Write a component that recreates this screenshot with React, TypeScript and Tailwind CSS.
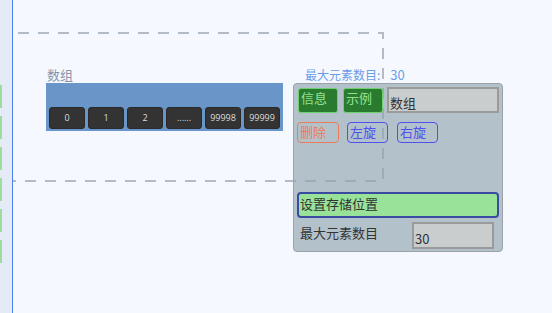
import React from "react";

const font = "font-['Noto_Sans_CJK_SC','Noto_Sans',sans-serif]";

const cells = ["0", "1", "2", "......", "99998", "99999"];

const SideMarks = () => (
  <div className="w-[13px] shrink-0 bg-[#e4ebf7] border-r border-[#4d80ef] flex flex-col gap-[8px] pt-[85px]">
    {Array.from({ length: 6 }).map((_, i) => (
      <div key={i} className="w-[2px] h-[23px] bg-[#9ddc9d]" />
    ))}
  </div>
);

const ArrayNode = () => (
  <div className="ml-[33px] flex flex-col">
    <div className="text-[13px] leading-[16px] text-[#8794a6] pl-[1px] h-[16px]">数组</div>
    <div className="w-[237px] h-[48px] bg-[#6995c8] flex items-end gap-[3px] px-[3px] pb-[2px]">
      {cells.map((c) => (
        <div
          key={c}
          className="w-[36px] h-[22px] rounded-[3px] bg-[#333333] border border-[#2a2a2a] flex items-center justify-center text-[9px] text-[#dddddd] font-['Open_Sans',sans-serif]"
        >
          {c}
        </div>
      ))}
    </div>
  </div>
);

const Panel = () => (
  <div className="absolute left-[280px] top-[83px] w-[210px] h-[169px] rounded-[4px] border border-[#9aa2a8] bg-[#8fa4ae]/65 flex flex-col px-[3px] pt-[3px]">
    <div className="flex items-start">
      <div className="ml-[1px] mt-[1px] w-[40px] h-[25px] rounded-[3px] bg-[#2a7a30] border border-[#6fd06f] text-[13px] leading-[18px] text-[#93e293] pl-[2px]">
        信息
      </div>
      <div className="ml-[5px] mt-[1px] w-[40px] h-[25px] rounded-[3px] bg-[#2a7a30] border border-[#6fd06f] text-[13px] leading-[18px] text-[#93e293] pl-[2px]">
        示例
      </div>
      <div className="ml-[4px] w-[112px] h-[26px] bg-[#c9cdce] border-2 border-[#9a9a9a] text-[13px] leading-[16px] text-[#333333] pl-[1px] pt-[6px]">
        数组
      </div>
    </div>
    <div className="flex mt-[9px]">
      <div className="w-[42px] h-[21px] rounded-[4px] border border-[#eb7b5c] text-[13px] leading-[18px] text-[#eb7b5c] pl-[2px]">
        删除
      </div>
      <div className="ml-[8px] w-[41px] h-[21px] rounded-[4px] border border-[#5050ee] text-[13px] leading-[18px] text-[#5050ee] pl-[2px]">
        左旋
      </div>
      <div className="ml-[9px] w-[41px] h-[21px] rounded-[4px] border border-[#5050ee] text-[13px] leading-[18px] text-[#5050ee] pl-[2px]">
        右旋
      </div>
    </div>
    <div className="mt-[49px] w-[202px] h-[26px] rounded-[4px] bg-[#98e29a] border-2 border-[#3b4ba2] text-[13px] leading-[20px] text-[#333333] pl-[1px]">
      设置存储位置
    </div>
    <div className="flex items-start mt-[4px]">
      <div className="ml-[3px] mt-[2px] text-[13px] leading-[18px] text-[#333333]">最大元素数目</div>
      <div className="ml-[34px] w-[82px] h-[27px] bg-[#c9cdce] border-2 border-[#9a9a9a] text-[13px] leading-[16px] text-[#333333] pl-[1px] pt-[7px]">
        30
      </div>
    </div>
  </div>
);

export default function App() {
  return (
    <div className={`w-[552px] h-[313px] flex bg-[#f5f9ff] overflow-hidden ${font}`}>
      <SideMarks />
      <div className="relative flex-1">
        <svg className="absolute inset-0" width="539" height="313">
          <path
            d="M5 33 H370 V181 H0"
            fill="none"
            stroke="#b3bcc6"
            strokeWidth="2"
            strokeDasharray="11 9"
          />
        </svg>
        <div className="relative flex items-start pt-[67px]">
          <ArrayNode />
          <div className="ml-[22px] text-[12px] leading-[16px] text-[#6b9de6]">
            最大元素数目:<span className="ml-[10px] text-[13px]">30</span>
          </div>
        </div>
        <Panel />
      </div>
    </div>
  );
}
